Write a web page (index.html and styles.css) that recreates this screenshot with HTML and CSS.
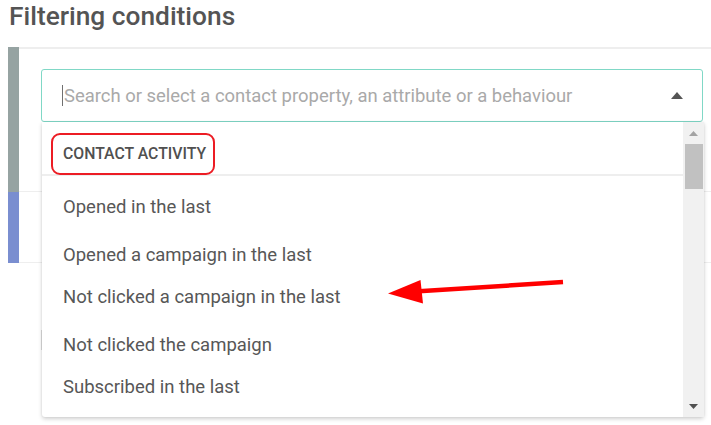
FILE: index.html
```html
<!DOCTYPE html>
<html>
<head>
<meta charset="utf-8">
<link rel="stylesheet" href="styles.css">
</head>
<body>
<h1 class="title">Filtering conditions</h1>
<div class="panel">
  <div class="bar">
    <div class="bar-gray"></div>
    <div class="bar-blue"></div>
  </div>
  <div class="content">
    <div class="row row-first">
      <div class="select">
        <div class="input">
          <span class="caret"></span>
          <span class="placeholder">Search or select a contact property, an attribute or a behaviour</span>
          <svg class="toggle" width="12" height="7" viewBox="0 0 12 7"><path d="M0 7 L6 0 L12 7 Z" fill="#555"/></svg>
        </div>
        <div class="menu">
          <div class="list">
            <div class="group-head"><span class="group-label">CONTACT ACTIVITY</span></div>
            <div class="item item-first">Opened in the last</div>
            <div class="item item-gap">Opened a campaign in the last</div>
            <div class="item">Not clicked a campaign in the last</div>
            <div class="item item-gap">Not clicked the campaign</div>
            <div class="item">Subscribed in the last</div>
          </div>
          <div class="scrollbar">
            <div class="sb-btn"><svg width="9" height="5" viewBox="0 0 9 5"><path d="M0 5 L4.5 0 L9 5 Z" fill="#a3a3a3"/></svg></div>
            <div class="sb-track"><div class="sb-thumb"></div></div>
            <div class="sb-btn"><svg width="9" height="5" viewBox="0 0 9 5"><path d="M0 0 L4.5 5 L9 0 Z" fill="#505050"/></svg></div>
          </div>
        </div>
      </div>
    </div>
    <div class="row row-second"></div>
    <div class="row row-third"><div class="ghost-field"></div></div>
  </div>
</div>
<svg class="arrow" width="711" height="425" viewBox="0 0 711 425">
  <line x1="563" y1="282" x2="415" y2="291.5" stroke="#ff0000" stroke-width="4.5"/>
  <path d="M388 293.5 L420.5 280 L423 303.5 Z" fill="#ff0000"/>
</svg>
</body>
</html>
```

FILE: styles.css
```css
html, body {
  margin: 0;
  padding: 0;
  background: #ffffff;
  font-family: Roboto, "Noto Sans", sans-serif;
  color: #555555;
  width: 711px;
  height: 425px;
  overflow: hidden;
  position: relative;
}

.title {
  margin: 0;
  padding: 0 0 0 9px;
  height: 47px;
  box-sizing: border-box;
  font-size: 26.3px;
  font-weight: 500;
  line-height: 32px;
  color: #545454;
}

.panel {
  display: flex;
  margin-left: 8px;
}

.bar {
  width: 11px;
  display: flex;
  flex-direction: column;
  flex-shrink: 0;
}

.bar-gray {
  height: 145px;
  background: #96a3a2;
}

.bar-blue {
  height: 71px;
  background: #7a8ed0;
}

.content {
  flex: 1;
  display: flex;
  flex-direction: column;
}

.row {
  border-bottom: 1px solid #eeeeee;
  box-sizing: border-box;
}

.row-first {
  height: 145px;
  border-top: 2px solid #eeeeee;
  padding: 20px 8px 0 22px;
}

.row-second {
  height: 71px;
}

.row-third {
  border-bottom: none;
  padding: 67px 0 0 22px;
}

.ghost-field {
  width: 40px;
  height: 20px;
  border-left: 1px solid #dcdcdc;
}

.select {
  position: relative;
  z-index: 2;
}

.input {
  height: 53px;
  box-sizing: border-box;
  border: 1.5px solid #80d8c6;
  border-radius: 3px;
  display: flex;
  align-items: center;
  padding: 0 19px 0 20px;
  background: #ffffff;
}

.caret {
  width: 1px;
  height: 21px;
  background: #707070;
  margin-right: 1px;
}

.placeholder {
  flex: 1;
  font-size: 18.45px;
  color: #a9a9a9;
  white-space: nowrap;
}

.toggle {
  display: block;
}

.menu {
  position: absolute;
  left: 1px;
  right: -1px;
  top: 53px;
  height: 295px;
  background: #ffffff;
  display: flex;
  box-shadow: 0 2px 4px rgba(0, 0, 0, 0.18), 0 0 2px rgba(0, 0, 0, 0.08);
  border-radius: 0 0 3px 3px;
}

.list {
  flex: 1;
  display: flex;
  flex-direction: column;
}

.group-head {
  height: 54px;
  border-bottom: 2px solid #eeeeee;
  box-sizing: border-box;
  padding: 11px 0 0 9px;
}

.group-label {
  display: inline-block;
  height: 42px;
  box-sizing: border-box;
  border: 2px solid #ec1c24;
  border-radius: 9px;
  padding: 0 7px 0 10px;
  font-size: 15.8px;
  font-weight: 500;
  line-height: 38px;
  color: #505050;
}

.item {
  height: 42px;
  line-height: 42px;
  padding-left: 21px;
  font-size: 18.5px;
  color: #575757;
  white-space: nowrap;
}

.item-first {
  margin-top: 10px;
}

.item-gap {
  margin-top: 6px;
}

.scrollbar {
  width: 21px;
  background: #f1f1f1;
  display: flex;
  flex-direction: column;
}

.sb-btn {
  height: 22px;
  display: flex;
  align-items: center;
  justify-content: center;
}

.sb-track {
  flex: 1;
  padding: 0 1px 0 2px;
}

.sb-thumb {
  height: 45px;
  background: #c1c1c1;
}

.arrow {
  position: absolute;
  left: 0;
  top: 0;
  pointer-events: none;
  z-index: 5;
}
```
